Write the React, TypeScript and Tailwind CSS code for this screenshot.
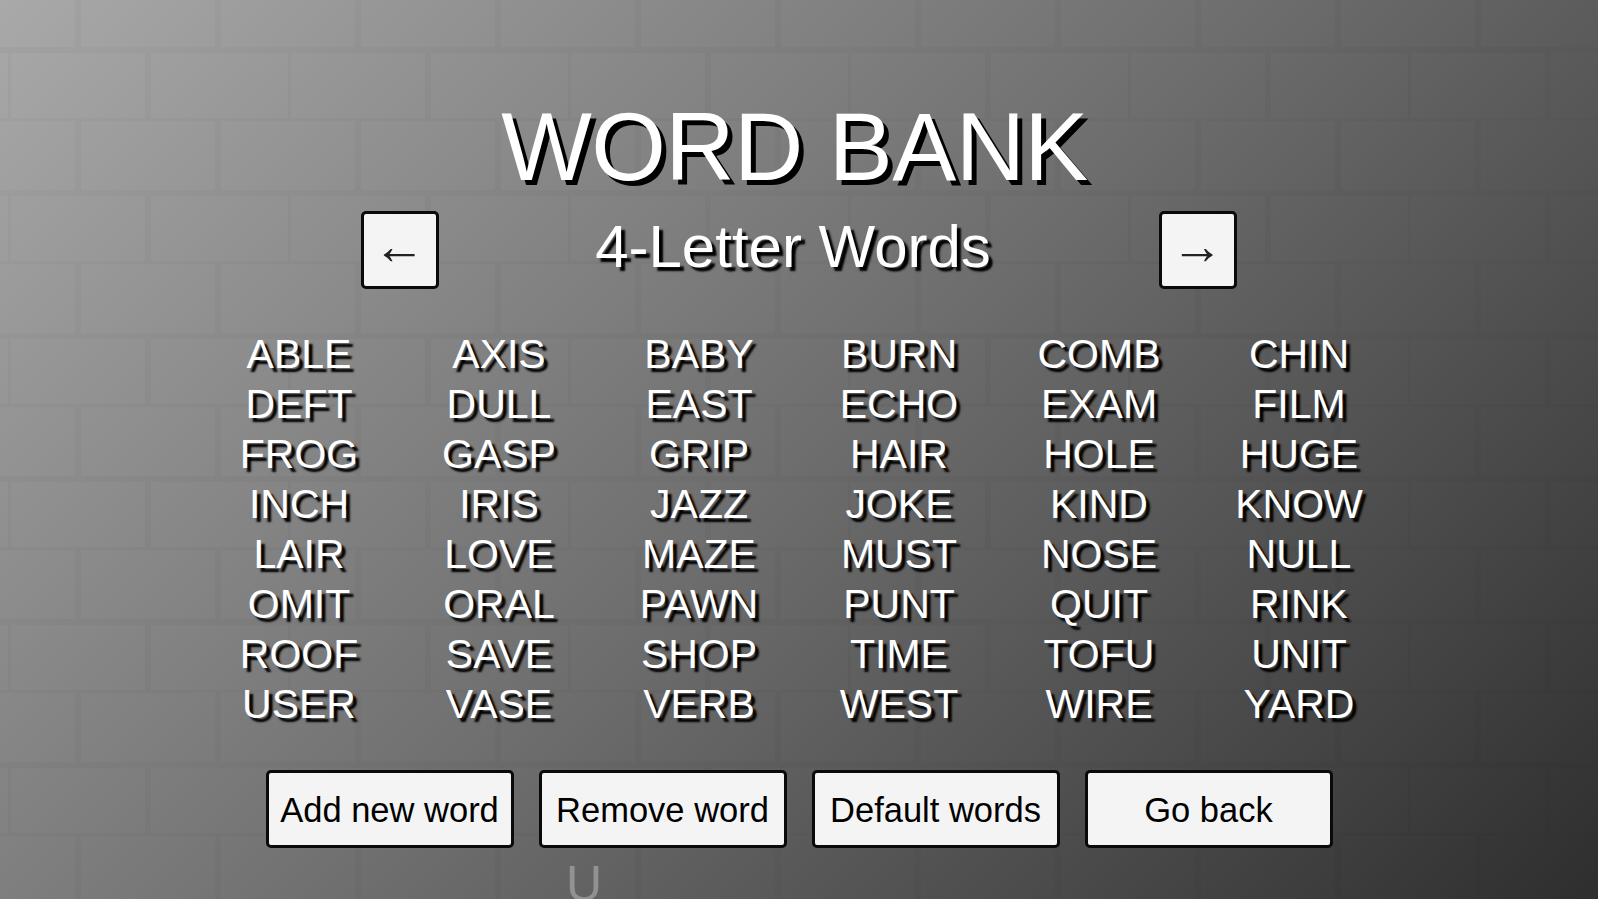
const WORDS = [
  ['ABLE', 'AXIS', 'BABY', 'BURN', 'COMB', 'CHIN'],
  ['DEFT', 'DULL', 'EAST', 'ECHO', 'EXAM', 'FILM'],
  ['FROG', 'GASP', 'GRIP', 'HAIR', 'HOLE', 'HUGE'],
  ['INCH', 'IRIS', 'JAZZ', 'JOKE', 'KIND', 'KNOW'],
  ['LAIR', 'LOVE', 'MAZE', 'MUST', 'NOSE', 'NULL'],
  ['OMIT', 'ORAL', 'PAWN', 'PUNT', 'QUIT', 'RINK'],
  ['ROOF', 'SAVE', 'SHOP', 'TIME', 'TOFU', 'UNIT'],
  ['USER', 'VASE', 'VERB', 'WEST', 'WIRE', 'YARD'],
];

const ACTIONS = ['Add new word', 'Remove word', 'Default words', 'Go back'];

function BrickTexture() {
  return (
    <svg className="absolute inset-0 h-full w-full" aria-hidden="true">
      <defs>
        <pattern id="bricks" x="8" y="-22" width="280" height="143" patternUnits="userSpaceOnUse">
          <path
            d="M70 0V72M210 0V72M0 72V143M140 72V143M0 72H280M0 143H280"
            fill="none"
            stroke="#000"
            strokeOpacity="0.028"
            strokeWidth="6"
          />
        </pattern>
      </defs>
      <rect width="100%" height="100%" fill="url(#bricks)" />
    </svg>
  );
}

function ArrowButton({ label }: { label: string }) {
  return (
    <button className="flex h-[78px] w-[78px] items-center justify-center rounded-[5px] border-[3px] border-[#0a0a0a] bg-[#f4f4f4] pr-[2px] pb-2 text-[52px] leading-none text-[#222]">
      {label}
    </button>
  );
}

export default function App() {
  return (
    <div className="relative flex h-screen flex-col items-center overflow-hidden bg-[linear-gradient(135deg,#a9a9a9_0%,#6e6e6e_50%,#2e2e2e_100%)] font-['Liberation_Sans',Arial,sans-serif] text-white">
      <BrickTexture />

      <main className="relative flex flex-col items-center pt-[92px]">
        <h1 className="pr-[9px] text-[96px] leading-[110px] font-normal tracking-[-0.6px] [text-shadow:5px_5px_0_#000]">
          WORD BANK
        </h1>

        <div className="flex w-[876px] items-center justify-between pt-[9px]">
          <ArrowButton label="←" />
          <h2 className="pr-[12px] pb-[7px] text-[60px] leading-none font-normal [text-shadow:4px_4px_2px_#000]">
            4-Letter Words
          </h2>
          <ArrowButton label="→" />
        </div>

        <div className="grid w-[1200px] grid-cols-6 pt-[40px]">
          {WORDS.flat().map(word => (
            <div key={word} className="text-center text-[41px] leading-[50px] [text-shadow:4px_4px_2px_#000]">
              {word}
            </div>
          ))}
        </div>

        <div className="flex gap-[25px] pt-[41px]">
          {ACTIONS.map(action => (
            <button
              key={action}
              className="h-[78px] w-[248px] rounded-[5px] border-[3px] border-[#0a0a0a] bg-[#f4f4f4] pt-[2px] text-[34.5px] leading-none text-black"
            >
              {action}
            </button>
          ))}
        </div>
      </main>

      <span className="absolute top-[859px] left-[566px] text-[50px] leading-none text-white/30">U</span>
    </div>
  );
}
